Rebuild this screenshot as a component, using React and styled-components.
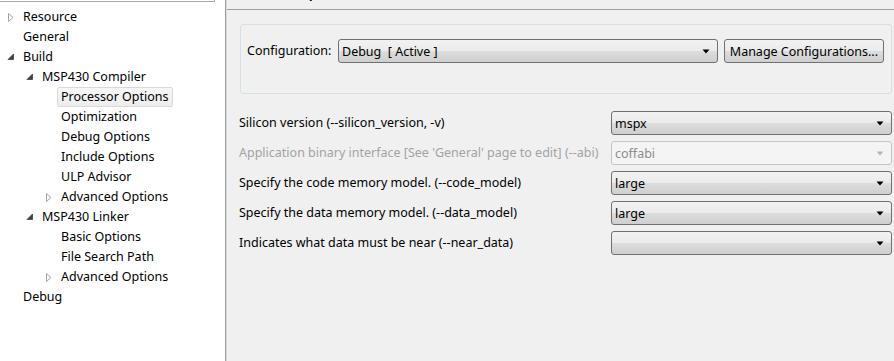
import React from 'react';
import styled, { createGlobalStyle } from 'styled-components';

const GlobalStyle = createGlobalStyle`
  html, body {
    margin: 0;
    padding: 0;
    background: #ffffff;
  }
  body {
    font-family: 'Noto Sans', 'Liberation Sans', sans-serif;
    font-size: 12.5px;
    color: #000000;
  }
`;

const Page = styled.div`
  display: flex;
  width: 894px;
  height: 361px;
  overflow: hidden;
`;

const TreePanel = styled.div`
  width: 225px;
  flex-shrink: 0;
  background: #ffffff;
  border-right: 1px solid #9c9c9c;
  display: flex;
  flex-direction: column;
`;

const FilterEdge = styled.div`
  width: 214px;
  height: 1px;
  border-bottom: 1px solid #a9a9a9;
  border-right: 1px solid #a9a9a9;
`;

const TreeList = styled.div`
  display: flex;
  flex-direction: column;
  padding-top: 5px;
`;

const TreeRow = styled.div`
  display: flex;
  align-items: center;
  height: 20px;
  padding-left: ${(p) => 6 + p.$level * 19}px;
`;

const Twisty = styled.span`
  width: 15px;
  height: 20px;
  display: flex;
  align-items: center;
  justify-content: flex-start;
  padding-left: 1px;
`;

const TreeLabel = styled.span`
  line-height: 18px;
  padding: 0 3px;
  margin-left: -3px;
  border: 1px solid ${(p) => (p.$selected ? '#d9d9d9' : 'transparent')};
  border-radius: 2px;
  background: ${(p) => (p.$selected ? 'linear-gradient(#f7f7f7, #ededed)' : 'transparent')};
  white-space: nowrap;
`;

const Content = styled.div`
  flex: 1;
  background: #f0f0f0;
  border-left: 1px solid #dadada;
  display: flex;
  flex-direction: column;
  padding-right: 2px;
`;

const Header = styled.div`
  height: 9px;
  overflow: hidden;
  border-bottom: 1px solid #a0a0a0;
  margin-right: -2px;
  padding-left: 11px;
`;

const HeaderTitle = styled.div`
  margin-top: -14px;
  line-height: 16px;
  font-size: 12px;
  font-weight: bold;
`;

const GroupBox = styled.div`
  margin: 14px 0 0 13px;
  height: 70px;
  border: 1px solid #d5dfe5;
  border-radius: 3px;
  display: flex;
  align-items: flex-start;
  padding: 14px 7px 0 6px;
  box-sizing: border-box;
  gap: 6px;
`;

const ConfigLabel = styled.span`
  line-height: 24px;
  width: 85px;
  flex-shrink: 0;
`;

const Combo = styled.div`
  height: 24px;
  box-sizing: border-box;
  flex: ${(p) => (p.$grow ? 1 : 'none')};
  border: 1px solid ${(p) => (p.$disabled ? '#c4c4c4' : '#707070')};
  border-radius: 3px;
  background: ${(p) =>
    p.$disabled
      ? '#f4f4f4'
      : 'linear-gradient(#f2f2f2 0%, #ebebeb 50%, #dddddd 50%, #cfcfcf 100%)'};
  color: ${(p) => (p.$disabled ? '#8d8d8d' : '#000000')};
  display: flex;
  align-items: center;
  justify-content: space-between;
  padding: 0 7px 0 3px;
  white-space: pre;
`;

const Button = styled.div`
  height: 24px;
  box-sizing: border-box;
  padding: 0 5px;
  border: 1px solid #707070;
  border-radius: 3px;
  background: linear-gradient(#f2f2f2 0%, #ebebeb 50%, #dddddd 50%, #cfcfcf 100%);
  display: flex;
  align-items: center;
  white-space: nowrap;
`;

const OptionsGrid = styled.div`
  margin: 17px 0 0 12px;
  display: grid;
  grid-template-columns: 1fr 281px;
  row-gap: 6px;
  align-items: center;
`;

const OptionLabel = styled.span`
  line-height: 24px;
  white-space: nowrap;
  color: ${(p) => (p.$disabled ? '#a3a3a3' : '#000000')};
`;

const ClosedArrow = () => (
  <svg width="8" height="9" viewBox="0 0 8 9">
    <path d="M1.5 0.5 L6 4.5 L1.5 8.5 Z" fill="#ffffff" stroke="#a6a6a6" strokeWidth="1" />
  </svg>
);

const OpenArrow = () => (
  <svg width="8" height="8" viewBox="0 0 8 8">
    <path d="M6.5 1 L6.5 6.5 L1 6.5 Z" fill="#404040" stroke="#404040" strokeWidth="0.8" />
  </svg>
);

const DropArrow = ({ disabled }) => (
  <svg width="8" height="5" viewBox="0 0 8 5">
    <path d="M0.5 0.5 L7.5 0.5 L4 4.5 Z" fill={disabled ? '#b5b5b5' : '#000000'} />
  </svg>
);

const tree = [
  { label: 'Resource', level: 0, arrow: 'closed' },
  { label: 'General', level: 0 },
  { label: 'Build', level: 0, arrow: 'open' },
  { label: 'MSP430 Compiler', level: 1, arrow: 'open' },
  { label: 'Processor Options', level: 2, selected: true },
  { label: 'Optimization', level: 2 },
  { label: 'Debug Options', level: 2 },
  { label: 'Include Options', level: 2 },
  { label: 'ULP Advisor', level: 2 },
  { label: 'Advanced Options', level: 2, arrow: 'closed' },
  { label: 'MSP430 Linker', level: 1, arrow: 'open' },
  { label: 'Basic Options', level: 2 },
  { label: 'File Search Path', level: 2 },
  { label: 'Advanced Options', level: 2, arrow: 'closed' },
  { label: 'Debug', level: 0 },
];

const options = [
  { label: 'Silicon version (--silicon_version, -v)', value: 'mspx' },
  { label: "Application binary interface [See 'General' page to edit] (--abi)", value: 'coffabi', disabled: true },
  { label: 'Specify the code memory model. (--code_model)', value: 'large' },
  { label: 'Specify the data memory model. (--data_model)', value: 'large' },
  { label: 'Indicates what data must be near (--near_data)', value: '' },
];

const App = () => {
  return (
    <>
      <GlobalStyle />
      <Page>
        <TreePanel>
          <FilterEdge />
          <TreeList>
            {tree.map((item, i) => (
              <TreeRow key={i} $level={item.level}>
                <Twisty>
                  {item.arrow === 'closed' && <ClosedArrow />}
                  {item.arrow === 'open' && <OpenArrow />}
                </Twisty>
                <TreeLabel $selected={item.selected}>{item.label}</TreeLabel>
              </TreeRow>
            ))}
          </TreeList>
        </TreePanel>
        <Content>
          <Header>
            <HeaderTitle>Processor Options</HeaderTitle>
          </Header>
          <GroupBox>
            <ConfigLabel>Configuration:</ConfigLabel>
            <Combo $grow>
              <span>Debug  [ Active ]</span>
              <DropArrow />
            </Combo>
            <Button>Manage Configurations...</Button>
          </GroupBox>
          <OptionsGrid>
            {options.map((opt, i) => (
              <React.Fragment key={i}>
                <OptionLabel $disabled={opt.disabled}>{opt.label}</OptionLabel>
                <Combo $disabled={opt.disabled}>
                  <span>{opt.value}</span>
                  <DropArrow disabled={opt.disabled} />
                </Combo>
              </React.Fragment>
            ))}
          </OptionsGrid>
        </Content>
      </Page>
    </>
  );
};

export default App;
